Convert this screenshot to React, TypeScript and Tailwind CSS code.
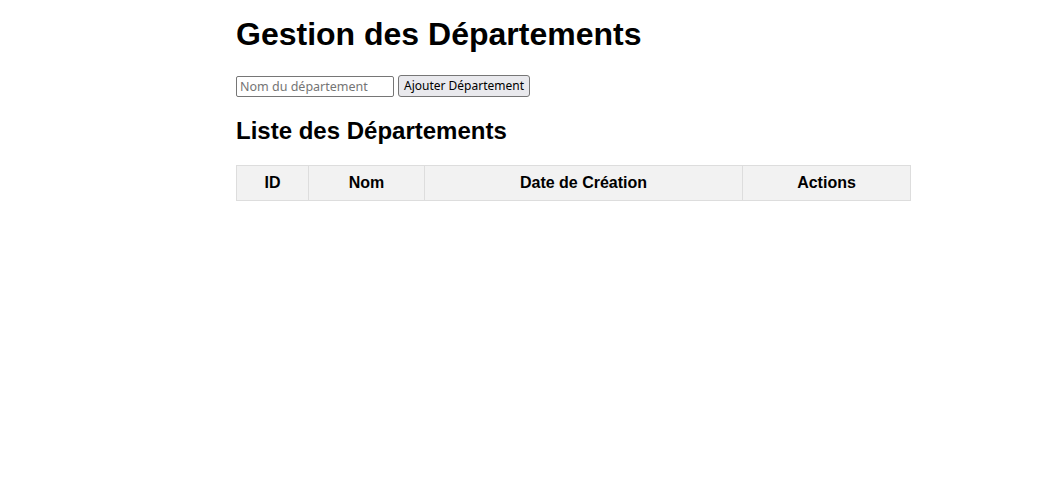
import React from "react";

export default function App() {
  const cols = [
    { label: "ID", w: "w-[71px]" },
    { label: "Nom", w: "w-[116px]" },
    { label: "Date de Création", w: "w-[318px]" },
    { label: "Actions", w: "w-[168px]" },
  ];
  return (
    <div className="min-h-[504px] bg-white pl-[236px] text-black" style={{ fontFamily: "'Liberation Sans', Arial, sans-serif" }}>
      <h1 className="pt-[16px] text-[32px] font-bold leading-[37px]">Gestion des Départements</h1>
      <div className="mt-[22px] flex h-[22px] items-center gap-[4px]">
        <input
          placeholder="Nom du département"
          className="h-[21px] w-[158px] rounded-[2px] border border-[#767676] px-[3px] text-[12.5px] text-black placeholder:text-[#757575] outline-none"
          style={{ fontFamily: "'Noto Sans', sans-serif" }}
        />
        <button
          className="h-[22px] w-[132px] rounded-[3px] border border-[#767676] bg-[#e9e9ed] px-0 text-[12px] leading-none"
          style={{ fontFamily: "'Noto Sans', sans-serif" }}
        >
          Ajouter Département
        </button>
      </div>
      <h2 className="mt-[20px] text-[24px] font-bold leading-[28px]">Liste des Départements</h2>
      <div className="mt-[20px] flex w-[675px] border border-[#dddddd] bg-[#f2f2f2]">
        {cols.map((c, i) => (
          <div
            key={c.label}
            className={`${c.w} flex h-[34px] items-center justify-center text-[16px] font-bold ${i > 0 ? "border-l border-[#dddddd]" : ""}`}
          >
            {c.label}
          </div>
        ))}
      </div>
    </div>
  );
}
